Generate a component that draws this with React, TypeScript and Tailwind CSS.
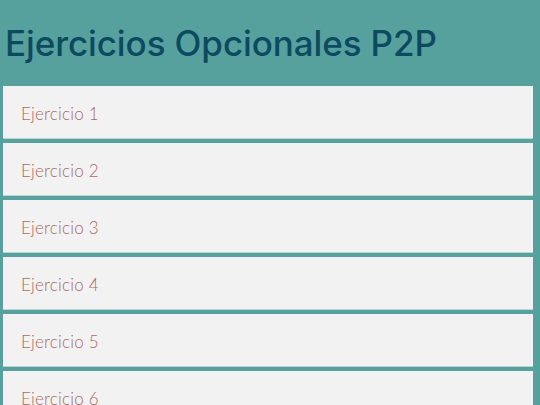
const items = ["Ejercicio 1", "Ejercicio 2", "Ejercicio 3", "Ejercicio 4", "Ejercicio 5", "Ejercicio 6", "Ejercicio 7"]

export default function App() {
  return (
    <div className="min-h-screen bg-[#56a19d] h-[405px] overflow-hidden">
      <h1 className="pl-[5px] pt-[18px] pb-[17px] text-[35px] leading-[51px] text-[#0d4a5f] font-['Inter',sans-serif] font-medium tracking-[-0.1px]">
        Ejercicios Opcionales P2P
      </h1>
      <ul className="flex flex-col gap-[4px] pl-[3px] pr-[7px]">
        {items.map((item) => (
          <li
            key={item}
            className="h-[53px] flex items-center pl-[18px] pt-[3px] bg-[#f2f2f2] border-b border-[#b9d6d3] text-[17px] text-[#ab6a62] font-['Lato',sans-serif] font-light tracking-[0.2px]"
          >
            {item}
          </li>
        ))}
      </ul>
    </div>
  )
}
